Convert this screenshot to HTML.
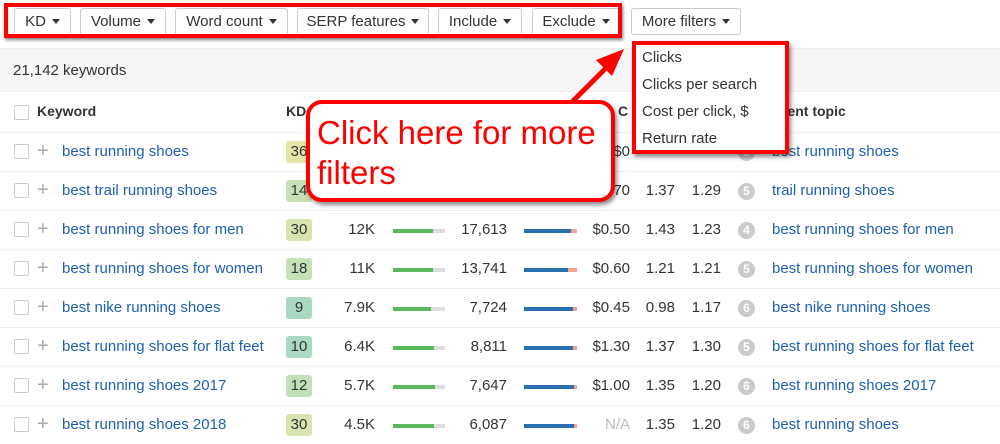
<!DOCTYPE html>
<html><head><meta charset="utf-8"><style>
*{box-sizing:border-box;margin:0;padding:0}
body{width:1000px;height:440px;overflow:hidden;background:#fff;font-family:"Liberation Sans",Arial,sans-serif;color:#333;position:relative;font-size:15px}
.abs{position:absolute}
.btn{position:absolute;top:8px;height:28px;border:1px solid #ccc;border-radius:3px;background:#fff;font-size:15px;line-height:26px;text-align:center;color:#333}
.tri{display:inline-block;width:0;height:0;border-left:4px solid transparent;border-right:4px solid transparent;border-top:5px solid #333;vertical-align:2px;margin-left:6px}
.row{position:absolute;left:0;width:1000px;height:39px;border-top:1px solid #eee}
.cb{position:absolute;left:14px;width:15px;height:15px;border:1px solid #ccc;border-radius:2px;background:#fff}
.kw{position:absolute;left:62px;color:#1f5fae;font-size:15px}
.plus{position:absolute;left:37px;color:#aaa;font-size:20px;line-height:20px}
.kd{position:absolute;left:286px;width:26px;height:22px;border-radius:3px;text-align:center;line-height:22px;font-size:15px}
.r{position:absolute;text-align:right;font-size:15px}
.gb{position:absolute;left:393px;width:52px;height:4px;background:#ddd}
.gb i{display:block;height:4px;background:#5cb85c}
.bb{position:absolute;left:524px;width:53px;height:4px;background:#f4a28c}
.bb i{display:block;height:4px;background:#2a6fb0}
.circ{position:absolute;left:738px;width:17px;height:17px;border-radius:50%;background:#cbcbcb;color:#fff;font-size:12px;font-weight:bold;text-align:center;line-height:17px}
.pt{position:absolute;left:772px;color:#1f5fae;font-size:15px}
</style></head><body>
<div class="btn" style="left:14px;width:57px">KD<span class="tri"></span></div>
<div class="btn" style="left:80px;width:86px">Volume<span class="tri"></span></div>
<div class="btn" style="left:175px;width:113px">Word count<span class="tri"></span></div>
<div class="btn" style="left:297px;width:132px">SERP features<span class="tri"></span></div>
<div class="btn" style="left:438px;width:84px">Include<span class="tri"></span></div>
<div class="btn" style="left:532px;width:88px">Exclude<span class="tri"></span></div>
<div class="btn" style="left:631px;width:110px;top:8px;height:27px">More filters<span class="tri"></span></div>
<div class="abs" style="left:4px;top:3px;width:618px;height:35px;border:4px solid #f00;box-shadow:1px 2px 3px rgba(0,0,0,.5)"></div>

<div class="abs" style="left:0;top:48px;width:1000px;height:44px;background:#f6f6f6;border-top:1px solid #eee;border-bottom:1px solid #eee"></div>
<div class="abs" style="left:13px;top:62px">21,142 keywords</div>

<div class="cb" style="top:105px"></div>
<div class="abs" style="left:37px;top:103px;font-weight:bold;font-size:14px">Keyword</div>
<div class="abs" style="left:286px;top:103px;font-weight:bold;font-size:14px">KD</div>
<div class="abs" style="left:618px;top:103px;font-weight:bold;font-size:14px">C</div>
<div class="abs" style="left:782px;top:103px;font-weight:bold;font-size:14px">rent topic</div>

<div class="row" style="top:132px"><div class="cb" style="top:11px"></div><div class="plus" style="top:8px">+</div><div class="kw" style="top:10px">best running shoes</div><div class="kd" style="top:8px;background:#e4e5a6">36</div><div class="r" style="left:600px;width:30px;top:10px">$0</div><div class="circ" style="top:11px">5</div><div class="pt" style="top:10px">best running shoes</div></div>
<div class="row" style="top:171px"><div class="cb" style="top:11px"></div><div class="plus" style="top:8px">+</div><div class="kw" style="top:10px">best trail running shoes</div><div class="kd" style="top:8px;background:#c7e1b4">14</div><div class="r" style="left:600px;width:30px;top:10px">70</div><div class="r" style="left:640px;width:35px;top:10px">1.37</div><div class="r" style="left:685px;width:36px;top:10px">1.29</div><div class="circ" style="top:11px">5</div><div class="pt" style="top:10px">trail running shoes</div></div>

<div class="row" style="top:210px"><div class="cb" style="top:11px"></div><div class="plus" style="top:8px">+</div><div class="kw" style="top:10px">best running shoes for men</div><div class="kd" style="top:8px;background:#d8e4af">30</div><div class="r" style="left:320px;width:55px;top:10px">12K</div><div class="gb" style="top:18px"><i style="width:40px"></i></div><div class="r" style="left:440px;width:67px;top:10px">17,613</div><div class="bb" style="top:18px"><i style="width:47px"></i></div><div class="r" style="left:580px;width:50px;top:10px">$0.50</div><div class="r" style="left:640px;width:35px;top:10px">1.43</div><div class="r" style="left:685px;width:36px;top:10px">1.23</div><div class="circ" style="top:11px">4</div><div class="pt" style="top:10px">best running shoes for men</div></div>
<div class="row" style="top:249px"><div class="cb" style="top:11px"></div><div class="plus" style="top:8px">+</div><div class="kw" style="top:10px">best running shoes for women</div><div class="kd" style="top:8px;background:#c6e1b7">18</div><div class="r" style="left:320px;width:55px;top:10px">11K</div><div class="gb" style="top:18px"><i style="width:40px"></i></div><div class="r" style="left:440px;width:67px;top:10px">13,741</div><div class="bb" style="top:18px"><i style="width:44px"></i></div><div class="r" style="left:580px;width:50px;top:10px">$0.60</div><div class="r" style="left:640px;width:35px;top:10px">1.21</div><div class="r" style="left:685px;width:36px;top:10px">1.21</div><div class="circ" style="top:11px">5</div><div class="pt" style="top:10px">best running shoes for women</div></div>
<div class="row" style="top:288px"><div class="cb" style="top:11px"></div><div class="plus" style="top:8px">+</div><div class="kw" style="top:10px">best nike running shoes</div><div class="kd" style="top:8px;background:#a8d8c1">9</div><div class="r" style="left:320px;width:55px;top:10px">7.9K</div><div class="gb" style="top:18px"><i style="width:38px"></i></div><div class="r" style="left:440px;width:67px;top:10px">7,724</div><div class="bb" style="top:18px"><i style="width:49px"></i></div><div class="r" style="left:580px;width:50px;top:10px">$0.45</div><div class="r" style="left:640px;width:35px;top:10px">0.98</div><div class="r" style="left:685px;width:36px;top:10px">1.17</div><div class="circ" style="top:11px">6</div><div class="pt" style="top:10px">best nike running shoes</div></div>
<div class="row" style="top:327px"><div class="cb" style="top:11px"></div><div class="plus" style="top:8px">+</div><div class="kw" style="top:10px">best running shoes for flat feet</div><div class="kd" style="top:8px;background:#a9d8c3">10</div><div class="r" style="left:320px;width:55px;top:10px">6.4K</div><div class="gb" style="top:18px"><i style="width:41px"></i></div><div class="r" style="left:440px;width:67px;top:10px">8,811</div><div class="bb" style="top:18px"><i style="width:49px"></i></div><div class="r" style="left:580px;width:50px;top:10px">$1.30</div><div class="r" style="left:640px;width:35px;top:10px">1.37</div><div class="r" style="left:685px;width:36px;top:10px">1.30</div><div class="circ" style="top:11px">5</div><div class="pt" style="top:10px">best running shoes for flat feet</div></div>
<div class="row" style="top:366px"><div class="cb" style="top:11px"></div><div class="plus" style="top:8px">+</div><div class="kw" style="top:10px">best running shoes 2017</div><div class="kd" style="top:8px;background:#c1e0ba">12</div><div class="r" style="left:320px;width:55px;top:10px">5.7K</div><div class="gb" style="top:18px"><i style="width:42px"></i></div><div class="r" style="left:440px;width:67px;top:10px">7,647</div><div class="bb" style="top:18px"><i style="width:50px"></i></div><div class="r" style="left:580px;width:50px;top:10px">$1.00</div><div class="r" style="left:640px;width:35px;top:10px">1.35</div><div class="r" style="left:685px;width:36px;top:10px">1.20</div><div class="circ" style="top:11px">6</div><div class="pt" style="top:10px">best running shoes 2017</div></div>
<div class="row" style="top:405px"><div class="cb" style="top:11px"></div><div class="plus" style="top:8px">+</div><div class="kw" style="top:10px">best running shoes 2018</div><div class="kd" style="top:8px;background:#d8e4af">30</div><div class="r" style="left:320px;width:55px;top:10px">4.5K</div><div class="gb" style="top:18px"><i style="width:41px"></i></div><div class="r" style="left:440px;width:67px;top:10px">6,087</div><div class="bb" style="top:18px"><i style="width:50px"></i></div><div class="r" style="left:580px;width:50px;top:10px;color:#bbb">N/A</div><div class="r" style="left:640px;width:35px;top:10px">1.35</div><div class="r" style="left:685px;width:36px;top:10px">1.20</div><div class="circ" style="top:11px">6</div><div class="pt" style="top:10px">best running shoes</div></div>

<svg class="abs" style="left:0;top:0" width="1000" height="440">
<line x1="568" y1="106" x2="612" y2="62" stroke="#f00" stroke-width="5"/>
<polygon points="624,49 596,60 612,76" fill="#f00"/>
</svg>
<div class="abs" style="left:306px;top:100px;width:309px;height:102px;border:4px solid #f00;border-radius:16px;background:#fff;box-shadow:2px 3px 4px rgba(0,0,0,.45)"></div>
<div class="abs" style="left:317px;top:113px;color:#f00;font-size:33px;line-height:40px">Click here for more<br>filters</div>
<div class="abs" style="left:632px;top:41px;width:157px;height:113px;border:4px solid #f00;background:#fff;box-shadow:2px 3px 4px rgba(0,0,0,.45)"></div>
<div class="abs" style="left:642px;top:44px;font-size:15px;line-height:27px;color:#333">Clicks<br>Clicks per search<br>Cost per click, $<br>Return rate</div>
</body></html>
